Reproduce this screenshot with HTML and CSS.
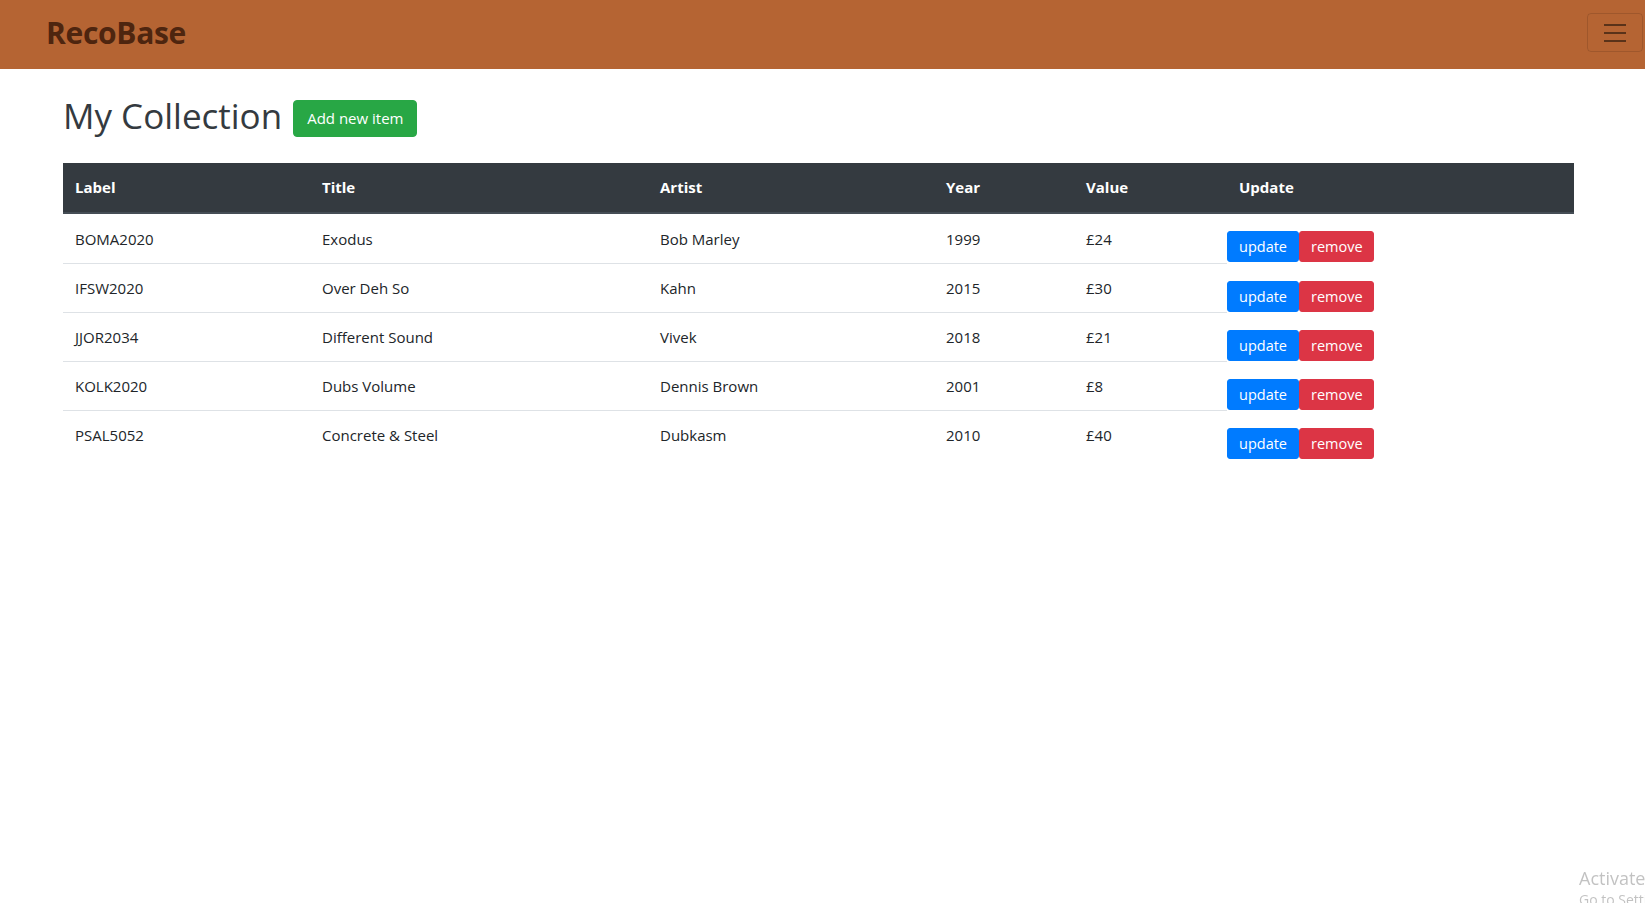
FILE: index.html
```html
<!DOCTYPE html>
<html lang="en">
<head>
<meta charset="utf-8">
<title>RecoBase</title>
<link rel="stylesheet" href="styles.css">
</head>
<body>
<nav class="navbar">
  <a class="brand" href="#">RecoBase</a>
  <button class="toggler" type="button" aria-label="Toggle navigation">
    <svg class="toggler-icon" viewBox="0 0 30 30" width="30" height="30" aria-hidden="true">
      <path d="M4 7h22M4 15h22M4 23h22" stroke="rgba(0,0,0,0.5)" stroke-width="2" stroke-linecap="butt" fill="none"/>
    </svg>
  </button>
</nav>
<main class="content">
  <div class="title-row">
    <h1 class="page-title">My Collection</h1>
    <button class="btn btn-add" type="button">Add new item</button>
  </div>
  <table class="records">
    <colgroup>
      <col class="c-label"><col class="c-title"><col class="c-artist"><col class="c-year"><col class="c-value"><col class="c-update">
    </colgroup>
    <thead>
      <tr><th>Label</th><th>Title</th><th>Artist</th><th>Year</th><th>Value</th><th>Update</th></tr>
    </thead>
    <tbody>
      <tr><td>BOMA2020</td><td>Exodus</td><td>Bob Marley</td><td>1999</td><td>£24</td><td class="actions"><button class="btn-sm btn-update" type="button">update</button><button class="btn-sm btn-remove" type="button">remove</button></td></tr>
      <tr><td>IFSW2020</td><td>Over Deh So</td><td>Kahn</td><td>2015</td><td>£30</td><td class="actions"><button class="btn-sm btn-update" type="button">update</button><button class="btn-sm btn-remove" type="button">remove</button></td></tr>
      <tr><td>JJOR2034</td><td>Different Sound</td><td>Vivek</td><td>2018</td><td>£21</td><td class="actions"><button class="btn-sm btn-update" type="button">update</button><button class="btn-sm btn-remove" type="button">remove</button></td></tr>
      <tr><td>KOLK2020</td><td>Dubs Volume</td><td>Dennis Brown</td><td>2001</td><td>£8</td><td class="actions"><button class="btn-sm btn-update" type="button">update</button><button class="btn-sm btn-remove" type="button">remove</button></td></tr>
      <tr><td>PSAL5052</td><td>Concrete &amp; Steel</td><td>Dubkasm</td><td>2010</td><td>£40</td><td class="actions"><button class="btn-sm btn-update" type="button">update</button><button class="btn-sm btn-remove" type="button">remove</button></td></tr>
    </tbody>
  </table>
</main>
<div class="watermark">
  <div class="wm-title">Activate Windows</div>
  <div class="wm-sub">Go to Settings to activate Windows.</div>
</div>
</body>
</html>
```

FILE: styles.css
```css
* { box-sizing: border-box; }
html, body { margin: 0; padding: 0; }
body {
  font-family: "Open Sans", "Noto Sans", sans-serif;
  color: #212529;
  background: #ffffff;
  font-size: 15px;
  line-height: 1.5;
  overflow: hidden;
  height: 903px;
}

.navbar {
  display: flex;
  justify-content: space-between;
  align-items: flex-start;
  height: 69px;
  padding: 0 2px 0 46px;
  background: #b56433;
}
.brand {
  margin-top: 13px;
  font-size: 30px;
  font-weight: 700;
  line-height: 40px;
  color: #4e250f;
  text-decoration: none;
  letter-spacing: -0.3px;
}
.toggler {
  margin-top: 13px;
  width: 56px;
  height: 39px;
  padding: 0;
  display: flex;
  align-items: center;
  justify-content: center;
  background: transparent;
  border: 1px solid rgba(0, 0, 0, 0.12);
  border-radius: 4px;
}
.toggler-icon { display: block; }

.content {
  padding: 23px 71px 0 63px;
}
.title-row {
  display: flex;
  align-items: flex-start;
  height: 45px;
}
.page-title {
  margin: 2px 0 0 0;
  font-size: 35px;
  font-weight: 400;
  line-height: 43px;
  color: #343a40;
}
.btn {
  font-family: inherit;
  cursor: pointer;
}
.btn-add {
  margin: 8px 0 0 11px;
  height: 37px;
  padding: 0 13px;
  font-size: 15px;
  line-height: 35px;
  color: #ffffff;
  background: #28a745;
  border: 1px solid #28a745;
  border-radius: 4px;
}

.records {
  width: 100%;
  margin-top: 26px;
  border-collapse: collapse;
  table-layout: fixed;
}
.c-label { width: 247px; }
.c-title { width: 338px; }
.c-artist { width: 286px; }
.c-year { width: 140px; }
.c-value { width: 153px; }
.records th, .records td {
  padding: 12px;
  text-align: left;
  vertical-align: top;
  line-height: 24px;
}
.records th {
  padding-bottom: 13px;
  background: #343a40;
  color: #ffffff;
  font-weight: 700;
  border-bottom: 2px solid #454d55;
}
.records td {
  border-top: 1px solid #dee2e6;
}
.records tbody tr:first-child td {
  border-top: none;
  padding-top: 13px;
}
.records td.actions,
.records tbody tr:first-child td.actions {
  border-top: none;
  padding: 17px 0 0 0;
  white-space: nowrap;
}
.btn-sm {
  height: 31px;
  padding: 0 11px;
  font-family: inherit;
  font-size: 14.5px;
  line-height: 29px;
  color: #ffffff;
  border-radius: 3px;
  vertical-align: top;
  cursor: pointer;
}
.btn-update {
  width: 72px;
  background: #007bff;
  border: 1px solid #007bff;
}
.btn-remove {
  width: 75px;
  background: #dc3545;
  border: 1px solid #dc3545;
}

.watermark {
  position: fixed;
  left: 1579px;
  top: 866px;
  color: rgba(120, 120, 120, 0.45);
  font-size: 18px;
  line-height: 25px;
  white-space: nowrap;
}
.wm-sub { font-size: 14px; line-height: 18px; }
```
